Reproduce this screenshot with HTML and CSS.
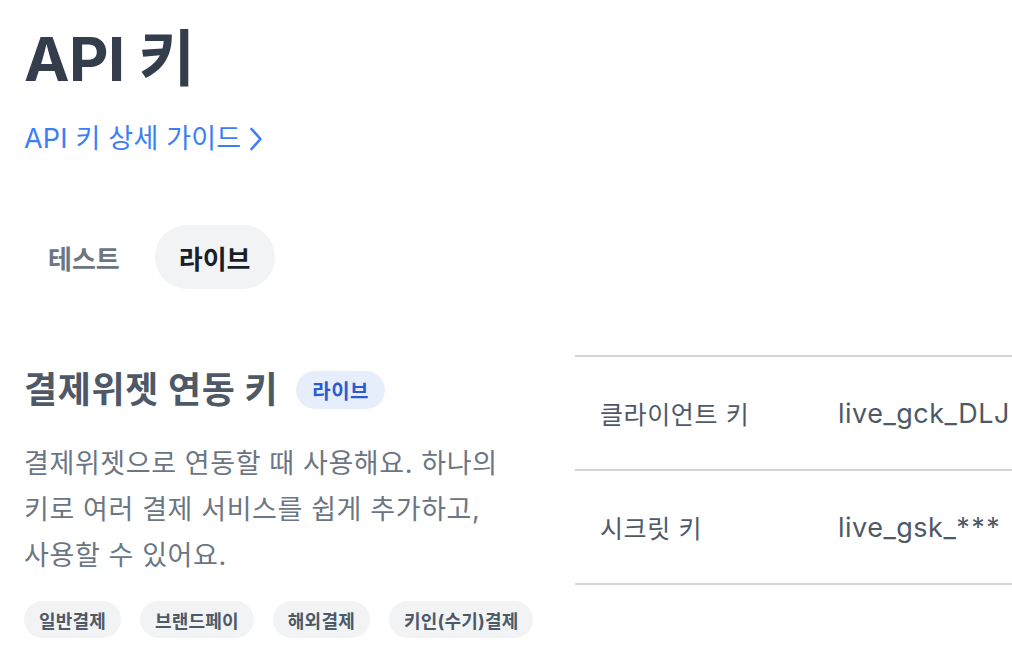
FILE: index.html
```html
<!DOCTYPE html>
<html lang="ko">
<head>
<meta charset="utf-8">
<title>API 키</title>
<link rel="stylesheet" href="styles.css">
</head>
<body>
<main class="page">
  <h1 class="title">API 키</h1>
  <a class="guide-link" href="#">API 키 상세 가이드<svg class="chev" width="14" height="26" viewBox="0 0 14 26"><path d="M2.5 3 L11.5 13 L2.5 23" fill="none" stroke="currentColor" stroke-width="2.6" stroke-linecap="round" stroke-linejoin="round"/></svg></a>

  <div class="tabs">
    <button class="tab">테스트</button>
    <button class="tab active">라이브</button>
  </div>

  <section class="key-section">
    <div class="key-info">
      <div class="key-head">
        <h2 class="key-title">결제위젯 연동 키</h2>
        <span class="badge">라이브</span>
      </div>
      <p class="key-desc">결제위젯으로 연동할 때 사용해요. 하나의<br>키로 여러 결제 서비스를 쉽게 추가하고,<br>사용할 수 있어요.</p>
      <ul class="chips">
        <li class="chip">일반결제</li>
        <li class="chip">브랜드페이</li>
        <li class="chip">해외결제</li>
        <li class="chip">키인(수기)결제</li>
      </ul>
    </div>
    <div class="key-table">
      <div class="key-row">
        <span class="key-label">클라이언트 키</span>
        <span class="key-value">live_gck_DLJ</span>
      </div>
      <div class="key-row">
        <span class="key-label">시크릿 키</span>
        <span class="key-value">live_gsk_<span class="stars">***</span></span>
      </div>
    </div>
  </section>
</main>
</body>
</html>
```

FILE: styles.css
```css
* { box-sizing: border-box; }
html, body {
  margin: 0;
  padding: 0;
  background: #ffffff;
  overflow: hidden;
}
body {
  font-family: Inter, "Noto Sans CJK KR", "Noto Sans", sans-serif;
  color: #333d4b;
}
.page {
  padding: 16px 0 0 24px;
  width: 1100px;
}
.title {
  margin: 0;
  font-size: 61px;
  font-weight: 700;
  line-height: 86px;
  color: #333d4b;
  letter-spacing: -0.5px;
}
.guide-link {
  display: inline-flex;
  align-items: center;
  gap: 8px;
  margin-top: 18px;
  font-size: 27px;
  line-height: 38px;
  color: #3c7ef4;
  text-decoration: none;
  letter-spacing: 0.2px;
}
.chev { display: block; }
.tabs {
  display: flex;
  gap: 11px;
  margin-top: 67px;
}
.tab {
  border: 0;
  background: transparent;
  font-family: inherit;
  font-size: 26px;
  font-weight: 700;
  color: #6b7684;
  height: 64px;
  padding: 0 24px;
  border-radius: 32px;
  cursor: pointer;
}
.tab.active {
  background: #f2f3f5;
  color: #191f28;
}
.key-section {
  display: flex;
  align-items: flex-start;
  gap: 37px;
  margin-top: 65px;
}
.key-info {
  width: 514px;
  flex: none;
  padding-top: 12px;
}
.key-head {
  display: flex;
  align-items: center;
  gap: 18px;
}
.key-title {
  margin: 0;
  font-size: 36px;
  font-weight: 700;
  line-height: 48px;
  color: #4e5968;
  letter-spacing: 0.6px;
}
.badge {
  display: inline-flex;
  align-items: center;
  height: 38px;
  padding: 0 16px;
  border-radius: 19px;
  background: #e6eefc;
  color: #2c5bd1;
  font-size: 20px;
  font-weight: 700;
  letter-spacing: 0.5px;
}
.key-desc {
  margin: 27px 0 0;
  font-size: 27px;
  line-height: 46px;
  color: #6b7684;
  letter-spacing: 0.6px;
}
.chips {
  list-style: none;
  margin: 22px 0 0;
  padding: 0;
  display: flex;
  gap: 19px;
}
.chip {
  flex: none;
  white-space: nowrap;
  height: 37px;
  display: inline-flex;
  align-items: center;
  padding: 0 15px;
  border-radius: 19px;
  background: #f2f3f5;
  color: #4e5968;
  font-size: 18px;
  font-weight: 700;
  letter-spacing: 0.2px;
}
.key-table {
  flex: 1;
  margin-top: 1px;
  border-top: 2px solid #d1d6db;
}
.key-row {
  display: flex;
  align-items: center;
  height: 114px;
  border-bottom: 2px solid #d1d6db;
  padding-left: 25px;
}
.key-label {
  width: 238px;
  flex: none;
  font-size: 25px;
  color: #4e5968;
  letter-spacing: 0.6px;
}
.key-value {
  font-size: 27px;
  color: #4e5968;
  letter-spacing: 0.5px;
  white-space: nowrap;
}
.stars {
  letter-spacing: 1.5px;
}
```
